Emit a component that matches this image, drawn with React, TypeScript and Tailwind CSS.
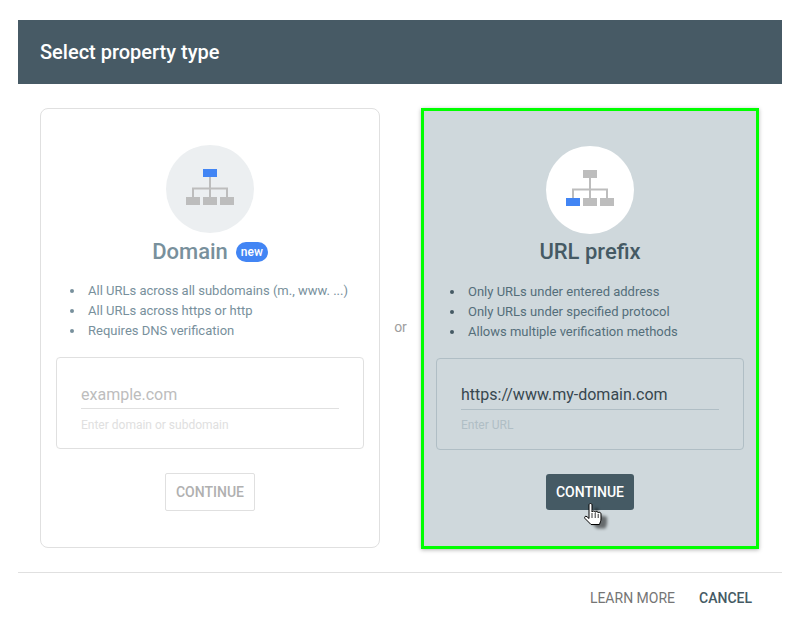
import React from "react";

function Tree({ active }: { active: "top" | "left" }) {
  const grey = "#bdbdbd";
  const blue = "#4285f4";
  return (
    <svg width="48" height="36" viewBox="0 0 48 36" className="block mb-1">
      <path d="M24 8V28M7 28V19.500H41V28" fill="none" stroke={grey} strokeWidth="2" />
      <rect x="17" y="0" width="14" height="8" fill={active === "top" ? blue : grey} />
      <rect x="0" y="28" width="14" height="8" fill={active === "left" ? blue : grey} />
      <rect x="17" y="28" width="14" height="8" fill={grey} />
      <rect x="34" y="28" width="14" height="8" fill={grey} />
    </svg>
  );
}

function Bullets({ items, text, dot, className }: { items: string[]; text: string; dot: string; className: string }) {
  return (
    <ul className={`ml-[14px] text-[13px] leading-[20px] ${text} ${className}`}>
      {items.map((t) => (
        <li key={t} className="flex items-center gap-[14px]">
          <span className={`w-1 h-1 rounded-full shrink-0 ${dot}`} />
          <span>{t}</span>
        </li>
      ))}
    </ul>
  );
}

function Cursor() {
  return (
    <svg
      width="26"
      height="30"
      viewBox="0 0 26 30"
      className="absolute left-[38px] top-[28px]"
    >
      <path
        d="M8 4.500c0-2 3-2 3 0V11c.5-1.300 3-1.300 3.200.3.500-1.200 2.800-1 3 .5.700-.9 2.700-.6 2.800 1V18c0 2-1 3.500-1.500 5.500h-8.500L4 17.500c-1.200-1.500.5-3 2-1.800L8 17.500z"
        transform="translate(3 3)"
        fill="#000"
        opacity="0.5"
        style={{ filter: "blur(1.5px)" }}
      />
      <path
        d="M5 3c0-2 3-2 3 0v7c.5-1.300 3-1.300 3.200.3.500-1.200 2.800-1 3 .5.700-.9 2.700-.6 2.800 1V17c0 2-1 3.500-1.500 5.500H7L1 16.500c-1.200-1.500.5-3 2-1.800l2 1.800z"
        fill="#fff"
        stroke="#000"
        strokeWidth="1"
      />
      <path d="M8 11v5M11.200 11v5M14.200 12v4" stroke="#000" strokeWidth="0.8" fill="none" />
    </svg>
  );
}

export default function App() {
  return (
    <div className="w-[802px] h-[626px] bg-white pt-5 pl-[18px] pr-5 font-['Roboto',sans-serif] overflow-hidden">
      <header className="h-16 bg-[#475a65] flex items-center px-[22px] text-white text-[20px] font-medium">
        Select property type
      </header>

      <main className="flex px-[22px] pt-6">
        <section className="w-[340px] h-[440px] shrink-0 border border-[#e0e0e0] rounded-lg flex flex-col pt-9 px-[15px]">
          <div className="w-[88px] h-[88px] rounded-full bg-[#eceff1] self-center flex items-center justify-center">
            <Tree active="top" />
          </div>
          <div className="flex items-center justify-center h-9 mt-[1px]">
            <h2 className="text-[22px] leading-9 font-medium text-[#78909c]">Domain</h2>
            <span className="ml-2 h-5 w-8 rounded-full bg-[#4285f4] text-white text-[12px] font-medium leading-5 text-center">
              new
            </span>
          </div>
          <Bullets
            className="mt-[11px]"
            text="text-[#78909c]"
            dot="bg-[#78909c]"
            items={["All URLs across all subdomains (m., www. ...)", "All URLs across https or http", "Requires DNS verification"]}
          />
          <div className="mt-4 h-[92px] border border-[#e0e0e0] rounded pt-[25px] px-6">
            <div className="h-[26px] border-b border-[#e0e0e0] text-[16px] leading-6 text-[#bdbdbd]">example.com</div>
            <div className="mt-2 text-[12px] leading-4 text-[#e0e0e0]">Enter domain or subdomain</div>
          </div>
          <button className="mt-6 self-center w-[90px] h-[38px] border border-[#e0e0e0] rounded-[2px] text-[14px] font-medium text-[#b0b0b0]">
            CONTINUE
          </button>
        </section>

        <div className="w-[41px] shrink-0 flex justify-center items-center h-[440px] pb-[2px] text-[14px] text-[#9e9e9e]">or</div>

        <section className="w-[338px] h-[441px] shrink-0 border-[3px] border-[#00ff00] bg-[#cfd8dc] shadow-[0_1px_4px_rgba(0,0,0,0.3)] flex flex-col pt-[35px] px-3">
          <div className="w-[88px] h-[88px] rounded-full bg-white self-center flex items-center justify-center">
            <Tree active="left" />
          </div>
          <h2 className="h-9 text-center text-[22px] leading-9 font-medium text-[#455a64]">URL prefix</h2>
          <Bullets
            className="mt-3"
            text="text-[#546e7a]"
            dot="bg-[#455a64]"
            items={["Only URLs under entered address", "Only URLs under specified protocol", "Allows multiple verification methods"]}
          />
          <div className="mt-4 h-[92px] border border-[#b0bec5] rounded pt-[24px] px-6">
            <div className="h-[27px] border-b border-[#b0bec5] text-[16px] leading-6 text-[#37474f]">https://www.my-domain.com</div>
            <div className="mt-[7px] text-[12px] leading-4 text-[#b0bec5]">Enter URL</div>
          </div>
          <div className="relative mt-6 self-center w-[88px] h-9">
            <button className="w-full h-full bg-[#455a64] rounded-[3px] text-white text-[14px] font-medium">
              CONTINUE
            </button>
            <Cursor />
          </div>
        </section>
      </main>

      <footer className="mt-[23px] border-t border-[#e0e0e0] flex justify-end gap-6 pr-[30px] pt-4 text-[14px] font-normal leading-[18px]">
        <span className="text-[#757575]">LEARN MORE</span>
        <span className="text-[#455a64] font-medium">CANCEL</span>
      </footer>
    </div>
  );
}
